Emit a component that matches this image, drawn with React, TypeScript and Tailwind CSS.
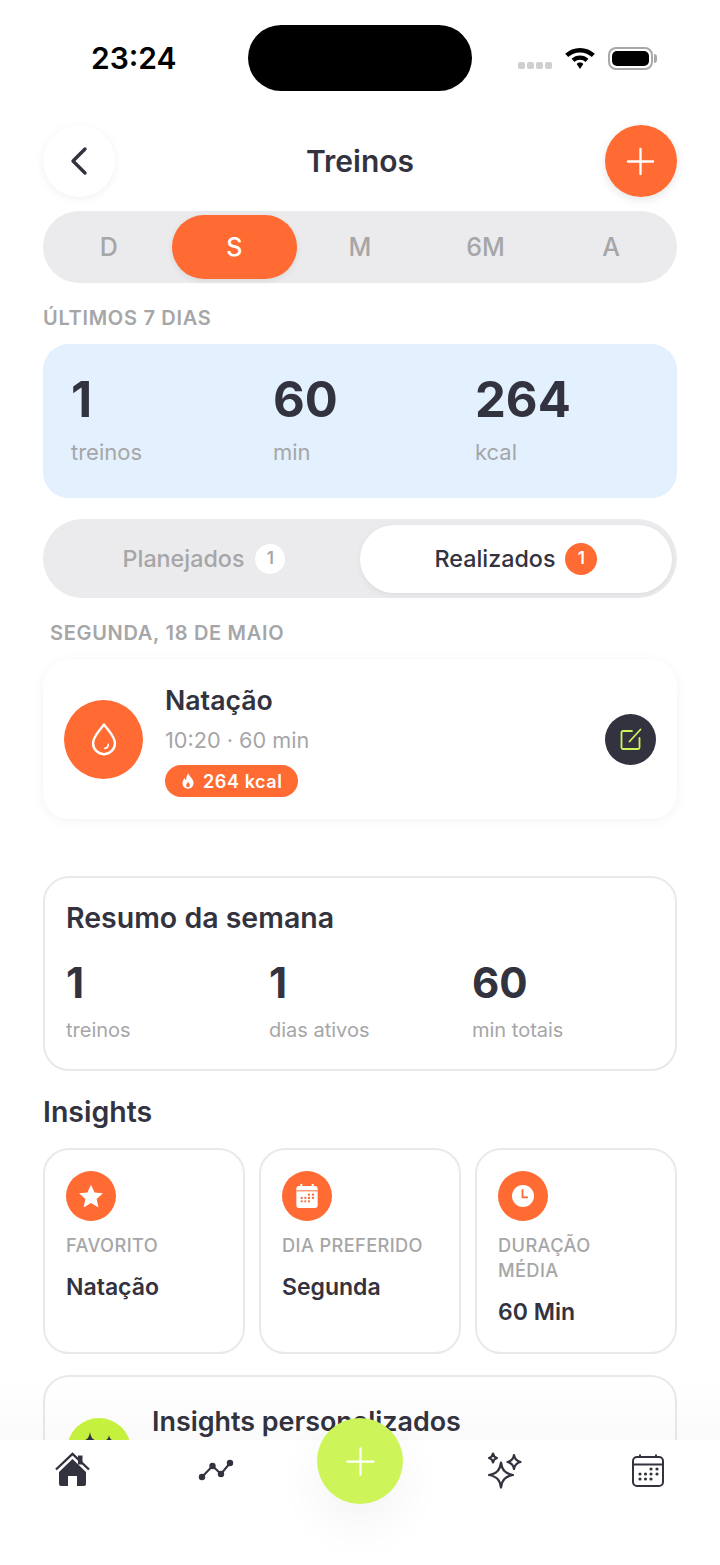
import { Plus } from 'lucide-react';

const ink = 'text-[#33333f]';

function StatusBar() {
  return (
    <div className="flex h-[125px] items-start px-[43px]">
      <div className="relative flex h-[116px] w-full items-center justify-between">
        <span className="ml-[48px] text-[30px] font-semibold leading-none text-black">23:24</span>
        <div className="absolute left-[205px] top-[25px] h-[66px] w-[224px] rounded-[33px] bg-black" />
        <div className="mr-[20px] flex items-center gap-[12px]">
          <div className="mt-[14px] flex gap-[2px]">
            <i className="h-[7px] w-[7px] rounded-[2px] bg-[#cfcfd2]" />
            <i className="h-[7px] w-[7px] rounded-[2px] bg-[#cfcfd2]" />
            <i className="h-[7px] w-[7px] rounded-[2px] bg-[#cfcfd2]" />
            <i className="h-[7px] w-[7px] rounded-[2px] bg-[#cfcfd2]" />
          </div>
          <svg width="32" height="24" viewBox="0 0 32 24" fill="black">
            <path d="M16 2C10 2 5 4.300 1.200 7.800l3 3.200C7.200 8.200 11.400 6.400 16 6.400s8.800 1.800 11.800 4.600l3-3.200C27 4.300 22 2 16 2z" />
            <path d="M16 9.400c-3.200 0-6.200 1.200-8.400 3.300l3 3.200c1.400-1.300 3.300-2.100 5.400-2.100s4 .8 5.400 2.100l3-3.200c-2.200-2.100-5.200-3.300-8.400-3.300z" />
            <path d="M16 16.600c-1.300 0-2.400.5-3.300 1.300L16 23l3.300-5.100c-.9-.8-2-1.300-3.300-1.300z" />
          </svg>
          <div className="flex items-center gap-[1px]">
            <div className="h-[23px] w-[45px] rounded-[8px] border-2 border-[#a9a9a9] p-[2px]">
              <div className="h-full w-full rounded-[5px] bg-black" />
            </div>
            <div className="h-[9px] w-[3px] rounded-r-full bg-[#a9a9a9]" />
          </div>
        </div>
      </div>
    </div>
  );
}

function Header() {
  return (
    <div className="flex items-center justify-between">
      <button className="flex h-[72px] w-[72px] items-center justify-center rounded-full bg-white shadow-[0_2px_10px_rgba(0,0,0,0.06)]">
        <svg width="20" height="30" viewBox="0 0 20 30" fill="none" stroke="#33333f" strokeWidth="3.400" strokeLinecap="round" strokeLinejoin="round">
          <path d="M16 3 4 15l12 12" />
        </svg>
      </button>
      <h1 className={`text-[30px] font-semibold ${ink}`}>Treinos</h1>
      <button className="flex h-[72px] w-[72px] items-center justify-center rounded-full bg-[#ff6b32] shadow-[0_3px_10px_rgba(0,0,0,0.1)]">
        <Plus size={43} strokeWidth={1.3} className="text-white" />
      </button>
    </div>
  );
}

function PeriodTabs() {
  const items = ['D', 'S', 'M', '6M', 'A'];
  return (
    <div className="mt-[14px] flex h-[72px] items-center rounded-full bg-[#ebebed] px-[3px]">
      {items.map((item) => (
        <div
          key={item}
          className={
            item === 'S'
              ? 'flex h-[64px] flex-1 items-center justify-center rounded-[32px] bg-[#ff6b32] pt-[2px] text-[25px] font-medium text-white shadow-[0_2px_6px_rgba(0,0,0,0.08)]'
              : 'flex h-[64px] flex-1 items-center justify-center pt-[2px] text-[25px] font-medium text-[#a6a6a8]'
          }
        >
          {item}
        </div>
      ))}
    </div>
  );
}

function HeroStat({ value, label }: { value: string; label: string }) {
  return (
    <div className="flex-1">
      <div className={`text-[49px] font-bold leading-[60px] ${ink}`}>{value}</div>
      <div className="mt-[8px] text-[22px] leading-[28px] text-[#a6a6a8]">{label}</div>
    </div>
  );
}

function WeekStat({ value, label }: { value: string; label: string }) {
  return (
    <div className="flex-1">
      <div className={`text-[42px] font-bold leading-[52px] ${ink}`}>{value}</div>
      <div className="mt-[8px] text-[20px] leading-[26px] text-[#a6a6a8]">{label}</div>
    </div>
  );
}

function DoneTabs() {
  return (
    <div className="mt-[21px] flex h-[79px] items-center rounded-full bg-[#ebebed] p-[5px]">
      <div className="flex flex-1 items-center justify-center gap-[11px] pt-[1px] text-[23.300px] font-medium text-[#a6a6a8]">
        Planejados
        <span className="flex h-[30px] w-[30px] items-center justify-center rounded-full bg-white text-[17px] font-semibold">1</span>
      </div>
      <div className={`flex h-[68px] w-[312px] items-center justify-center gap-[10px] rounded-full bg-white pt-[1px] text-[23.300px] font-medium shadow-[0_2px_6px_rgba(0,0,0,0.06)] ${ink}`}>
        Realizados
        <span className="flex h-[32px] w-[32px] items-center justify-center rounded-full bg-[#ff6b32] text-[17px] font-semibold text-white">1</span>
      </div>
    </div>
  );
}

function WorkoutCard() {
  return (
    <div className="mt-[14px] flex h-[160px] items-center rounded-[26px] bg-white px-[21px] shadow-[0_2px_12px_rgba(0,0,0,0.05)]">
      <div className="flex h-[79px] w-[79px] items-center justify-center rounded-full bg-[#ff6b32]">
        <svg width="30" height="34" viewBox="0 0 24 28" fill="none" stroke="white" strokeWidth="2" strokeLinecap="round" strokeLinejoin="round">
          <path d="M12 2c4 5.500 9 10 9 15.500a9 9 0 0 1-18 0C3 12 8 7.500 12 2z" />
          <path d="M15.500 18.500c0 1.800-1.200 3-3 3.300" strokeWidth="1.400" />
        </svg>
      </div>
      <div className="ml-[22px] flex-1 pt-[3px]">
        <div className={`text-[26.700px] font-semibold leading-[32px] ${ink}`}>Natação</div>
        <div className="mt-[10px] text-[21.700px] leading-[28px] text-[#a6a6a8]">10:20 · 60 min</div>
        <div className="mt-[11px] inline-flex h-[32px] items-center gap-[9px] rounded-full bg-[#ff6b32] pl-[17px] pr-[15px] text-[18px] font-semibold tracking-[0.6px] text-white">
          <svg width="12" height="16" viewBox="0 0 13 17" fill="white">
            <path fillRule="evenodd" d="M6.800 0c.4 2.800 5.700 5.600 5.700 10.800C12.500 14.400 10 17 6.500 17S.5 14.400.5 10.800C.5 8.300 2 6.500 3 5.300c.2 1.200.7 2 1.500 2.400C4.600 4.900 5.200 2 6.800 0zM6.500 9.500c-1 1.300-2 2.300-2 3.700 0 1.200.9 2.100 2 2.100s2-.9 2-2.100c0-1.400-1-2.400-2-3.700z" />
          </svg>
          264 kcal
        </div>
      </div>
      <div className="flex h-[51px] w-[51px] items-center justify-center rounded-full bg-[#33333f]">
        <svg width="24" height="24" viewBox="0 0 24 24" fill="none" stroke="#cdf55a" strokeWidth="1.800" strokeLinecap="round" strokeLinejoin="round">
          <path d="M13 4H4a1.500 1.500 0 0 0-1.500 1.500v15A1.500 1.500 0 0 0 4 22h15a1.500 1.500 0 0 0 1.500-1.500V11" />
          <path d="M10.500 14.500 21.500 2.500" />
        </svg>
      </div>
    </div>
  );
}

function InsightCard({ label, value, icon }: { label: string; value: string; icon: React.ReactNode }) {
  return (
    <div className="flex-1 rounded-[26px] border-2 border-[#e9e9eb] bg-white px-[21px] pt-[21px]">
      <div className="flex h-[50px] w-[50px] items-center justify-center rounded-full bg-[#ff6b32]">{icon}</div>
      <div className="mt-[12px] text-[18.200px] font-medium leading-[25px] tracking-[0.4px] text-[#a6a6a8]">{label}</div>
      <div className={`mt-[14px] text-[23px] font-semibold leading-[30px] ${ink}`}>{value}</div>
    </div>
  );
}

// calendar dots: last two on top, full middle row, three on the bottom
const calendarDots = [
  [19, 15], [25, 15],
  [8, 20], [13.500, 20], [19, 20], [25, 20],
  [8, 25], [13.500, 25], [19, 25],
];

function BottomNav() {
  return (
    <div className="absolute inset-x-0 bottom-0">
      <div className="h-[60px] bg-gradient-to-b from-transparent to-black/[0.02]" />
      <div className="grid h-[125px] grid-cols-5 justify-items-center bg-white pt-[12px]">
        <svg width="40" height="40" viewBox="0 0 40 40" fill="#33333f">
          <rect x="26" y="3.500" width="4.500" height="9" />
          <path d="M20.500 7 34 20v12a2 2 0 0 1-2 2h-7V24h-9v10H9a2 2 0 0 1-2-2V20z" />
          <path d="M4 17.500 20.500 2 37 17.500" fill="none" stroke="#33333f" strokeWidth="2.400" />
        </svg>
        <svg width="40" height="40" viewBox="0 0 40 40" fill="none" stroke="#33333f" strokeWidth="2">
          <path d="M6 25 16.500 14 25 22l9-11" />
          <circle cx="6" cy="25" r="2.200" fill="#33333f" />
          <circle cx="16.500" cy="14" r="2.200" fill="#33333f" />
          <circle cx="25" cy="22" r="2.200" fill="#33333f" />
          <circle cx="34" cy="11" r="2.200" fill="#33333f" />
        </svg>
        <div />
        <svg width="40" height="40" viewBox="0 0 40 40" fill="none" stroke="#33333f" strokeWidth="2.200" strokeLinejoin="round">
          <path d="M17 10.500c1 7.500 4 11 12 12.500-8 1.500-11 5-12 12.500-1-7.500-4-11-12-12.500 8-1.500 11-5 12-12.500z" />
          <path d="M30 3c.6 4 2.500 6 6.500 7-4 1-5.900 3-6.500 7-.6-4-2.500-6-6.500-7 4-1 5.900-3 6.500-7z" />
          <path d="M9 1.500c.4 2.500 1.700 3.800 4 4.500-2.300.7-3.600 2-4 4.500-.4-2.500-1.700-3.800-4-4.500 2.300-.7 3.600-2 4-4.500z" />
        </svg>
        <svg width="32" height="36" viewBox="0 0 32 36" fill="none" stroke="#33333f" strokeWidth="2" className="mt-[2px]">
          <rect x="1" y="3" width="30" height="29" rx="4" />
          <path d="M1 10.500h30M8 0.500v3M24 0.500v3" />
          {calendarDots.map(([cx, cy]) => (
            <circle key={`${cx}-${cy}`} cx={cx} cy={cy} r="1.600" fill="#33333f" stroke="none" />
          ))}
        </svg>
      </div>
      <button className="absolute left-[317px] top-[38px] flex h-[86px] w-[86px] items-center justify-center rounded-full bg-[#cdf55a] shadow-[0_20px_50px_rgba(0,0,0,0.05)]">
        <Plus size={45} strokeWidth={1.200} className="text-white" />
      </button>
    </div>
  );
}

export default function App() {
  return (
    <div className="relative h-[1565px] w-[720px] overflow-hidden bg-white [font-family:Inter,sans-serif]">
      <StatusBar />
      <main className="px-[43px]">
        <Header />
        <PeriodTabs />
        <div className="mt-[23px] text-[20px] font-semibold leading-[24px] tracking-[0.7px] text-[#a6a6a8]">ÚLTIMOS 7 DIAS</div>
        <div className="mt-[14px] flex h-[154px] items-center rounded-[26px] bg-[#e3f0fd] pb-[6px] pl-[28px]">
          <HeroStat value="1" label="treinos" />
          <HeroStat value="60" label="min" />
          <HeroStat value="264" label="kcal" />
        </div>
        <DoneTabs />
        <div className="mt-[23px] pl-[7px] text-[20px] font-semibold leading-[24px] tracking-[0.7px] text-[#a6a6a8]">SEGUNDA, 18 DE MAIO</div>
        <WorkoutCard />

        <section className="mt-[57px] h-[195px] rounded-[26px] border-2 border-[#e9e9eb] bg-white pl-[21px] pt-[22px]">
          <h2 className={`text-[28.500px] font-semibold leading-[36px] ${ink}`}>Resumo da semana</h2>
          <div className="mt-[21px] flex">
            <WeekStat value="1" label="treinos" />
            <WeekStat value="1" label="dias ativos" />
            <WeekStat value="60" label="min totais" />
          </div>
        </section>

        <h2 className={`mt-[23px] text-[28.500px] font-semibold leading-[36px] ${ink}`}>Insights</h2>
        <div className="mt-[18px] flex h-[206px] gap-[14px]">
          <InsightCard
            label="FAVORITO"
            value="Natação"
            icon={
              <svg width="26" height="26" viewBox="0 0 24 24" fill="white">
                <path d="M12 1.500 15.300 8.700 23 9.500 17.200 14.700 18.900 22.500 12 18.500 5.100 22.500 6.800 14.700 1 9.500 8.700 8.700z" />
              </svg>
            }
          />
          <InsightCard
            label="DIA PREFERIDO"
            value="Segunda"
            icon={
              <svg width="22" height="24" viewBox="0 0 32 36" fill="white">
                <path d="M6 0h3v3h14V0h3v3h2a4 4 0 0 1 4 4v25a4 4 0 0 1-4 4H4a4 4 0 0 1-4-4V7a4 4 0 0 1 4-4h2z" />
                <rect x="0" y="9.500" width="32" height="1.500" fill="#ff6b32" />
                {calendarDots.map(([cx, cy]) => (
                  <circle key={`${cx}-${cy}`} cx={cx} cy={cy + 1} r="1.700" fill="#ff6b32" />
                ))}
              </svg>
            }
          />
          <InsightCard
            label="DURAÇÃO MÉDIA"
            value="60 Min"
            icon={
              <svg width="22" height="22" viewBox="0 0 24 24">
                <circle cx="12" cy="12" r="12" fill="white" />
                <path d="M11.500 4.500V13.500h6" fill="none" stroke="#ff6b32" strokeWidth="2" />
              </svg>
            }
          />
        </div>

        <section className="mt-[21px] h-[160px] rounded-[26px] border-2 border-[#e9e9eb] bg-white pl-[22px] pt-[28px]">
          <div className="flex gap-[21px]">
            <div className="mt-[13px] flex h-[64px] w-[64px] items-start justify-center rounded-full bg-[#c8f53f] pt-[14px]">
              <svg width="40" height="30" viewBox="0 0 40 30" fill="#33333f">
                <path d="M11 0c1 6 3 8 8 9-5 1-7 3-8 9-1-6-3-8-8-9 5-1 7-3 8-9z" />
                <path d="M30 3c.8 4 2.200 5.300 6 6-3.800.7-5.200 2-6 6-.8-4-2.200-5.300-6-6 3.800-.7 5.200-2 6-6z" />
              </svg>
            </div>
            <div className={`text-[26.900px] font-semibold leading-[32px] ${ink}`}>Insights personalizados</div>
          </div>
        </section>
      </main>
      <BottomNav />
    </div>
  );
}
